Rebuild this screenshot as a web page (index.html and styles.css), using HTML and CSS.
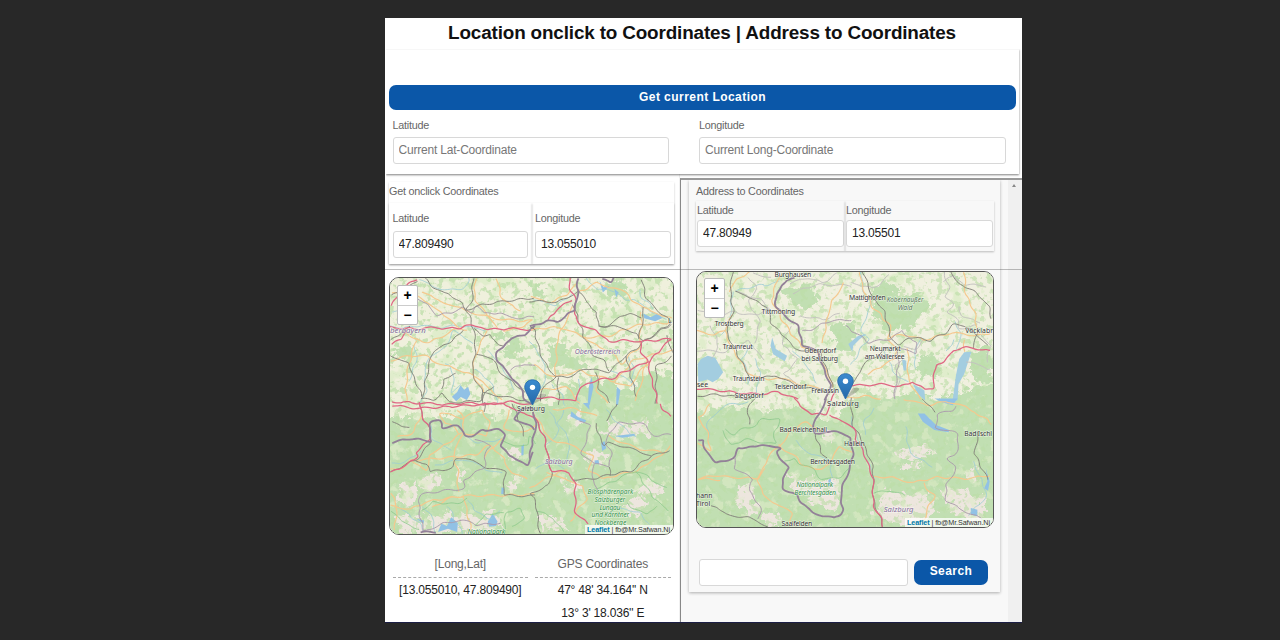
FILE: index.html
```html
<!DOCTYPE html>
<html lang="en">
<head>
<meta charset="utf-8">
<title>Location onclick to Coordinates</title>
<link rel="stylesheet" href="styles.css">
</head>
<body>
<svg class="defs" width="0" height="0" aria-hidden="true">
  <defs>
    <filter id="woods" x="0" y="0" width="100%" height="100%" color-interpolation-filters="sRGB">
      <feTurbulence type="fractalNoise" baseFrequency=".16" numOctaves="3" seed="8"/>
      <feColorMatrix values="0 0 0 0 .74  0 0 0 0 .87  0 0 0 0 .66  9 0 0 0 -4.8"/>
    </filter>
    <filter id="fields" x="0" y="0" width="100%" height="100%" color-interpolation-filters="sRGB">
      <feTurbulence type="fractalNoise" baseFrequency=".055" numOctaves="4" seed="21"/>
      <feColorMatrix values="0 0 0 0 .88  0 0 0 0 .93  0 0 0 0 .8  8 0 0 0 -4.2"/>
    </filter>
    <filter id="clearings" x="0" y="0" width="100%" height="100%" color-interpolation-filters="sRGB">
      <feTurbulence type="fractalNoise" baseFrequency=".09" numOctaves="4" seed="14"/>
      <feColorMatrix values="0 0 0 0 .87  0 0 0 0 .92  0 0 0 0 .79  9 0 0 0 -5.1"/>
    </filter>
    <filter id="rough" x="-10%" y="-10%" width="120%" height="120%" color-interpolation-filters="sRGB">
      <feTurbulence type="fractalNoise" baseFrequency=".12" numOctaves="3" seed="3" result="n"/>
      <feDisplacementMap in="SourceGraphic" in2="n" scale="18" xChannelSelector="R" yChannelSelector="G"/>
    </filter>
    <linearGradient id="pinFill" x1="0" y1="0" x2="0" y2="1"><stop offset="0" stop-color="#3b8bd0"/><stop offset="1" stop-color="#2568a8"/></linearGradient>
    <symbol id="pin" viewBox="0 0 28 28" overflow="visible">
      <path d="M9 25 L16 15 Q23 13 22 17 Q17 22 9 25Z" fill="#333" opacity=".25"/>
      <path d="M8.5.6C4 .6.7 3.900.7 8.100c0 2 .8 3.700 1.800 5.700L8.500 26l6-12.200c1-2 1.800-3.700 1.800-5.700C16.300 3.900 13 .6 8.500.6Z" fill="url(#pinFill)" stroke="#2a6cab" stroke-width=".9"/>
      <circle cx="8.500" cy="8.200" r="2.700" fill="#fff"/>
    </symbol>
  </defs>
</svg>

<main class="app">
  <h1 class="title">Location onclick to Coordinates | Address to Coordinates</h1>

  <section class="current">
    <button class="btn btn-wide">Get current Location</button>
    <div class="current-fields">
      <label class="field">Latitude<input placeholder="Current Lat-Coordinate"></label>
      <label class="field">Longitude<input placeholder="Current Long-Coordinate"></label>
    </div>
  </section>

  <div class="columns">
    <section class="click-col">
      <div class="click-card">
        <h2 class="caption">Get onclick Coordinates</h2>
        <div class="pair">
          <label class="field cell">Latitude<input value="47.809490"></label>
          <label class="field cell">Longitude<input value="13.055010"></label>
        </div>
      </div>

      <div class="map map-click">
        <svg class="tiles" viewBox="389 277 285 258" preserveAspectRatio="none">
          <rect x="389" y="277" width="285" height="258" fill="#eff0dc"/>
          <rect x="389" y="277" width="285" height="258" filter="url(#fields)"/>
          <g filter="url(#rough)">
            <path class="wood" d="M380 424L410 415L440 420L470 411L505 418L520 400L555 402L575 385L610 380L632 390L650 370L680 378V545H380Z"/>
            <path class="wood" d="M548 342L562 343L575 358L590 362L586 371L550 365ZM391 349L408 345L419 350L400 357L390 358ZM508 342L520 338L523 348L512 360L505 355ZM492 331L507 331L505 339L493 338ZM531 283L544 287L541 298L532 300ZM605 283L622 280L630 291L620 300L607 293Z"/>
            <path class="rock" d="M400 486L412 482L418 492L409 509L398 500ZM420 478L432 472L441 484L432 490L422 488ZM455 467L465 470L461 483L452 479ZM505 451L517 446L522 458L513 463ZM583 457L596 451L610 457L603 465L585 464ZM599 432L614 422L630 424L646 418L650 433L628 441L612 435ZM508 480L519 476L520 487L507 490ZM560 487L573 481L580 490L570 497ZM395 519L412 515L430 521L445 514L470 517L497 512L505 529L480 534H395ZM540 510L553 517L566 529L540 532ZM622 508L640 493L650 505L638 518ZM632 489L650 480L663 491L652 498ZM569 417L578 411L584 422L573 425Z"/>
          </g>
          <rect x="389" y="277" width="285" height="258" filter="url(#woods)" opacity=".75"/>
          <rect x="389" y="395" width="285" height="140" filter="url(#clearings)" opacity=".7"/>
          <g class="lines" transform="translate(384 270) scale(.33333)">
            <path class="lake" d="M202 380L218 366L228 345L239 359L251 350L258 372L247 390L229 381L215 394Z"/>
            <path class="stream" d="M100 25Q180 65 220 55T250 24M20 120L65 118L90 150M0 165Q60 178 110 162L160 172L220 162L300 180M270 220L210 180L180 230L135 260L120 300L125 370L108 400M270 300Q330 320 340 400M180 280Q220 300 200 370L230 345M90 225Q105 280 70 330M310 240Q360 285 390 355"/>
            <path class="road" d="M20 70Q90 55 155 115T250 180M115 62Q160 95 247 118Q330 155 447 150M275 20L270 86L340 175M60 175Q80 220 140 215L245 162M20 270Q80 250 130 260Q200 300 250 305Q300 340 350 385M340 20L350 80L410 120M95 215Q55 300 65 400M307 180L275 250L262 310L300 370M360 180Q390 185 447 150"/>
            <path class="border thin" d="M75 68L100 90L128 95L155 135L215 120L240 110L260 125L280 105L295 128L350 125L380 145L450 140M380 300L420 280L450 290"/>
            <path class="rail" d="M118 22L145 50L190 68L225 95L247 118L258 150L265 178L275 205L273 245L262 310L296 370L293 405M265 22L262 85L247 118M247 118L290 105L370 88L450 80M20 75L95 30M240 178L195 215L145 240L130 290L115 385M20 255L70 280L110 380M270 178L290 195L318 190L340 225L360 230M275 250L330 270L350 310L390 335L420 370M110 385L150 388L175 370L192 400L293 390L296 370L430 390M20 210L75 170M172 360L178 325L215 310M293 390L325 345"/>
            <path class="moto" d="M0 170L100 177L125 172L225 175L243 163L290 167L308 178L390 175L450 180M20 222L50 205L67 180M20 105L65 40L95 25M20 395L100 400L190 405L250 400L310 405L380 395L440 405"/>
            <path class="border" d="M450 168L415 195L378 200L358 232L340 240L338 270L370 298L380 325L405 340L417 380L440 405"/>
          </g>
          <g class="lines" transform="translate(530 270) scale(.33333)">
            <path class="lake" d="M210 30L223 50L240 45L220 65ZM255 54L268 65L260 80ZM185 320L192 350L180 405L174 405L178 350ZM262 350L273 360L266 405L260 405ZM342 128L365 140L385 128L400 142L378 152L345 143Z"/>
            <path class="stream" d="M170 20L200 60L235 50L290 90L315 80L350 115L410 145M10 85L75 105L125 70M0 210L35 260L50 315L30 360L0 385M65 340L95 370L105 405M150 330L145 405M245 300L290 325L318 345M300 260L315 300L305 350M330 60L340 85L375 115"/>
            <path class="road" d="M145 65L200 35L280 60L340 110L430 145M0 180L60 170L110 175L160 200L240 195L330 160L430 155M130 105L85 200L75 320M0 75L55 95L115 70L140 40M160 200L240 245L280 280L335 220M10 285L75 320L150 300L210 320L255 335L310 270L430 240M255 335L300 350L360 270M210 320L200 360L240 400M30 360L110 350L150 400M335 120L340 150L330 230M350 265L340 330L315 395"/>
            <path class="rail" d="M145 65L170 85L185 115L200 120L207 168L250 165L325 190L340 215L430 160M0 90L80 93L120 75L145 65M0 170L15 185L35 260L75 320L110 322L135 310L165 295L240 305L290 258L340 215L430 155M205 168L245 162L270 135L300 130L340 140M340 110L345 140L335 175L330 205M340 25L350 85L430 155M130 100L155 165L160 200L185 232L190 260L220 263L240 300M75 320L40 350L30 390M85 325L90 405M200 307L207 350L245 400M290 258L310 330L320 380M410 195L430 250M380 405L380 290L430 260"/>
            <path class="moto" d="M120 22L123 60L140 90L130 130L155 160L205 185L235 215L300 210L335 215L430 203M335 215L335 240L355 270L310 295L265 310L255 325L200 330L150 350L140 395L100 385L10 380M355 270L375 350L385 405M355 275L430 205M55 150L80 120L125 85"/>
            <path class="border" d="M0 168L50 150L80 155L135 115L145 65V20M220 22L245 38L252 20"/>
          </g>
          <g class="lines" transform="translate(384 403) scale(.33333)">
            <path class="lake" d="M412 130L420 124L418 158L412 158ZM160 390L170 365L187 372L200 345L220 363L218 390L190 380ZM310 360L325 335L340 358L335 372L315 374ZM95 350L118 355L116 365ZM352 255L360 258L358 275L351 275Z"/>
            <path class="stream" d="M135 70L145 110L200 145M110 310L140 335L155 390M40 310L95 355L120 390M190 310L205 340L235 395M250 295L275 330L310 350L345 330M225 40L240 95L280 120L350 110M20 185L60 180L105 145M150 190L235 170L350 215"/>
            <path class="road" d="M220 100L215 75L180 60L165 30L235 45L290 20L315 55L310 100L230 90L135 160L125 200L75 175M220 20L240 50L235 90L205 160L220 200V265M20 200Q50 205 80 175L220 160L280 155L315 125L360 165L380 210L430 230M20 310L75 320L120 300L240 280L350 278L450 275M145 315L190 290L240 280L260 390M110 35L85 90L35 105M350 110L300 165M20 270L35 310L30 380M375 25L360 75L410 90L450 70"/>
            <path class="park" d="M350 115L390 125L430 130L440 95L450 120M110 325L140 300L220 305L250 290M360 390L365 330L410 320L420 350L380 375M270 370L305 335L355 335M20 330Q60 370 100 380"/>
            <path class="border thin" d="M275 110L320 130L300 165L305 190L240 235L240 260L175 265L110 275L100 295L105 350L120 390M120 388L195 360L250 355L275 370L350 365"/>
            <path class="rail" d="M20 210L65 185L95 175L140 110L130 70L108 30L105 0M95 175L125 185L137 208L210 195L215 165L240 165L290 190L365 205L355 275L390 280L450 280M20 60L75 75M385 0L405 50L420 105M300 0L302 30"/>
            <path class="moto" d="M20 210L90 175L100 155L90 150L140 105L128 65L108 30L105 0M20 5L100 15L235 7L350 0L450 45"/>
            <path class="border" d="M20 118L75 108L140 115L130 65L165 45L170 75L225 70L240 100L275 100L290 80L350 80L360 100L350 130L375 160L430 188L448 150M450 20L410 15L390 50L435 65L450 80M110 390L155 388"/>
          </g>
          <g class="lines" transform="translate(530 403) scale(.33333)">
            <path class="lake" d="M125 25L145 42L170 52L165 60L140 50L122 40ZM160 0L178 0L180 20ZM215 122L225 115L230 137L218 145ZM255 100L315 93L318 99L280 105ZM195 174L207 172L209 184L196 185Z"/>
            <path class="stream" d="M60 30L90 80L50 130M100 20L85 65L120 110L115 175M230 20L260 60L320 100M20 200L60 170L100 200M270 320L330 330L360 370"/>
            <path class="road" d="M20 45L60 110L120 125L190 160L180 200L220 230L325 205L400 155L420 130M0 260L40 230L110 200M70 20L130 15L200 40M235 100L330 140L400 150M50 210L160 250L170 290L120 360"/>
            <path class="park" d="M190 265L320 205L375 290L420 330M320 205L410 255M290 300L350 340L380 310M20 330L70 345L100 385"/>
            <path class="border thin" d="M150 55L185 65L155 150L195 185L240 190L250 155L230 130L235 90L270 60L350 65L370 100L430 95M195 185L185 220L205 265"/>
            <path class="rail" d="M10 30L45 115L65 205L60 250L0 275L20 310L30 390M130 230L180 230L310 205L365 158L420 145M200 65L205 90L225 130L240 118L365 158M230 50L265 0M240 190L245 220"/>
            <path class="moto" d="M10 30L45 115L65 205L120 210L135 240V330L180 370M398 0L400 20L430 40"/>
            <path class="border" d="M0 170L5 110L20 85L10 30"/>
          </g>
          <g class="names">
            <text x="389" y="332" class="region" textLength="36" lengthAdjust="spacingAndGlyphs">berbayern</text>
            <text x="575" y="354" class="region" textLength="46" lengthAdjust="spacingAndGlyphs">Oberösterreich</text>
            <text x="545" y="464" class="region" textLength="28" lengthAdjust="spacingAndGlyphs">Salzburg</text>
            <text x="517" y="411" textLength="28">Salzburg</text>
            <text x="669" y="322">L</text>
            <g class="parkname"><text x="588" y="495" textLength="46" lengthAdjust="spacingAndGlyphs">Biosphärenpark</text><text x="595" y="502.500" textLength="31">Salzburger</text><text x="600" y="510.500" textLength="21">Lungau</text><text x="592" y="518" textLength="38">und Kärntner</text><text x="595" y="525.500" textLength="32">Nockberge</text><text x="467" y="535" textLength="38">Nationalpark</text></g>
          </g>
          <use href="#pin" x="524" y="379" width="28" height="28"/>
        </svg>
        <div class="zoom"><span>+</span><span>−</span></div>
        <div class="credit"><b>Leaflet</b> | fb@Mr.Safwan.Nj</div>
      </div>

      <div class="results">
        <div class="result"><h3>[Long,Lat]</h3><p>[13.055010, 47.809490]</p></div>
        <div class="result"><h3>GPS Coordinates</h3><p>47° 48' 34.164'' N</p><p>13° 3' 18.036'' E</p></div>
      </div>
    </section>

    <section class="address-col">
      <div class="address-card">
        <h2 class="caption">Address to Coordinates</h2>
        <div class="pair">
          <label class="field cell">Latitude<input value="47.80949"></label>
          <label class="field cell">Longitude<input value="13.05501"></label>
        </div>

        <div class="map map-address">
          <svg class="tiles" viewBox="696 271 298 256" preserveAspectRatio="none">
            <rect x="696" y="271" width="298" height="256" fill="#f0f0df"/>
            <rect x="696" y="271" width="298" height="256" filter="url(#fields)"/>
            <g filter="url(#rough)">
              <path class="wood" d="M690 415L730 405L765 412L800 407L835 420L850 400L870 392L890 400L915 390L930 400L970 390L1000 382V535H690Z"/>
              <path class="wood" d="M776 291L794 285L811 282L818 300L805 309L790 298ZM870 286L884 278L900 292L920 293L928 305L915 326L890 328L875 318ZM832 323L850 320L858 338L850 352L835 350ZM916 361L932 352L940 362L935 375L920 378ZM969 355L986 345L994 360L992 380L975 385ZM952 278L961 275L960 285Z"/>
              <path class="rock" d="M738 487L755 483L752 498L762 508L748 516L735 500ZM783 470L800 478L835 480L840 495L835 512L815 505L797 490ZM820 433L835 430L830 443ZM898 450L925 443L935 452L915 461L900 457ZM902 465L920 463L918 470L900 471ZM880 495L895 490L908 496L930 493L935 510L920 524L890 522L875 510ZM940 490L955 487L985 495V520L960 518ZM965 472L975 467L977 485ZM762 515L773 508L779 525L764 525Z"/>
            </g>
            <rect x="696" y="271" width="298" height="256" filter="url(#woods)" opacity=".65"/>
            <rect x="696" y="395" width="298" height="132" filter="url(#clearings)" opacity=".6"/>
            <g class="lines" transform="translate(690 265) scale(.33333)">
              <path class="lake pale" d="M20 295L30 280L50 270L73 276L85 297L97 320L82 340L65 350L50 342L22 350ZM245 215L256 250L290 270L283 287L248 266L240 240Z"/>
              <path class="stream" d="M125 75L120 160L90 210M190 240L150 280L175 320L170 360M220 55L160 70L130 75M270 45L220 60M310 260L350 300L380 350M190 400L210 320L190 280"/>
              <path class="local" d="M20 130L70 150L125 140L200 150L235 125M130 75L210 100L240 135M20 255L100 260L170 225L220 280M175 35L200 70L170 110L210 170L190 230M190 25L240 35M310 80L390 55L480 60M300 50L350 35L400 50L440 25M330 150L400 160L450 145M300 180L275 235L320 280L280 330L340 365M60 180L85 240L60 280"/>
              <path class="road" d="M275 20L250 70L245 105L290 185L335 240L380 265L405 310L430 370M115 75L140 40L180 20M125 150L100 195L65 205L20 195M100 195L130 260L175 325L235 345L260 335L400 375M400 230L415 130L460 50"/>
              <path class="rail" d="M130 75L190 100L230 125L245 175L315 252L390 260L430 370M125 22L120 75L128 145L105 195L135 255L170 320L175 345L255 330L330 365L430 380M20 390L80 385L180 400"/>
              <path class="moto" d="M20 370L80 375L135 380L200 385L265 378L300 390L320 405M420 405L440 380"/>
              <path class="border" d="M315 38L290 40L270 70L255 80L255 120L325 185L335 235L380 260L405 320L420 365L405 405"/>
              <path class="border thin" d="M340 195L370 190L420 165L480 160"/>
            </g>
            <g class="lines" transform="translate(845 265) scale(.33333)">
              <path class="lake pale" d="M345 280L360 260L382 258L360 325L343 355L340 405H325L335 330ZM10 235L40 210L65 205L45 220L25 240L22 258ZM172 280L185 285L185 315L177 315ZM205 355L240 375L242 405L220 385Z"/>
              <path class="stream" d="M50 20L55 70L80 110L50 190L70 220L15 300M230 220L210 260L215 310M325 220L310 260M330 170L350 200L340 250M120 260L130 290L160 340L190 345"/>
              <path class="local" d="M300 20L315 65L305 90L325 110L310 145L340 155L345 190L400 180M345 120L350 150L410 170M240 220L220 250L180 245M170 280L150 300L165 330L150 400M20 50L90 70L130 30M300 45L330 30L360 55L425 60M410 210L440 240L430 290M370 290L440 310"/>
              <path class="road" d="M45 20L55 65L80 115L135 180L130 220L175 205L240 225L325 200L400 210L440 200M360 20L365 80L395 150L400 210M130 220L160 250L150 280L65 325M190 250V340L230 400M0 400L55 390L110 400M360 225L360 260"/>
              <path class="rail" d="M55 20L80 90L120 140L135 210L160 240L190 215L225 220L260 225L310 200L320 178L365 180L430 240M320 20L340 50L390 75L410 100L435 120L442 160M20 355L45 320L65 290L130 245M385 250L400 205"/>
              <path class="moto" d="M10 358L60 360L110 355L170 365L205 345L240 375L265 370L275 300L300 285L330 255L370 245L440 258"/>
              <path class="border thin" d="M0 180L25 200L55 215L65 230L145 220L175 190L195 220L220 230L215 262L160 250L160 300L150 400"/>
            </g>
            <g class="lines" transform="translate(690 398) scale(.33333)">
              <path class="lake" d="M685 45L705 45L740 80L780 95L778 102L735 95L700 70ZM735 0L805 0L790 20L760 12ZM415 245L422 240L423 265L415 262ZM890 210L902 250L897 278L885 270L895 250ZM845 330L865 335L864 355L845 350Z"/>
              <path class="stream" d="M55 130L50 70L100 20L170 10M315 125L350 160L420 190L425 240M480 50L500 110L545 220M550 30L520 80L530 110M650 85L660 160L730 210M850 190L880 250L890 300L840 350"/>
              <path class="road" d="M60 20L20 60L50 100L60 160L20 130M90 245L20 240M20 240L70 230L110 235L200 240L245 160L265 145L305 95L350 70L400 100M200 240L220 290L260 320L305 345L300 385M260 140L305 165L340 205L400 215L450 145L490 160M555 235L600 235L670 255L740 235L830 240L900 230M700 255L735 290L710 350L690 380M640 0L720 20L770 5L860 40L910 80M205 240L220 215"/>
              <path class="park" d="M100 95L130 110L160 90L200 80L220 60L270 65L250 95L255 140L160 120L120 145L95 100M280 190L310 180L330 200L370 210L390 240L440 240L475 215M555 285L600 275L650 295"/>
              <path class="rail" d="M375 105L390 160L410 180M480 0L490 80L520 130L550 210V300L580 385M60 320L110 350L180 360L230 385M870 100L855 160L870 190L895 240M180 75L170 40L190 0M740 40L700 0"/>
              <path class="moto" d="M310 0L360 45L410 47L415 15M420 45L450 70L495 85L500 130L525 170L550 250L550 320L570 350L580 385"/>
              <path class="border" d="M20 122L35 123L40 150L75 195L130 180L145 148L195 148L215 138L250 150L275 148L260 160L265 185L300 208L275 240L280 270L315 290L350 335L430 362L460 335L450 290L470 235L490 170L480 120L440 95L420 105L370 105L370 80L400 20L410 0"/>
              <path class="border thin" d="M130 180L130 210L190 245L175 275L215 340L205 360M740 85L810 110L805 155L775 185L795 200L795 230L770 260L770 310L880 365M740 85L745 45L790 35L800 25"/>
            </g>
            <g class="names">
              <text x="774" y="276" textLength="37">Burghausen</text><text x="761" y="313" textLength="34">Tittmoning</text><text x="714" y="325" textLength="29">Trostberg</text><text x="722" y="348" textLength="30">Traunreut</text><text x="804" y="352" textLength="32">Oberndorf</text><text x="801" y="360" textLength="37">bei Salzburg</text><text x="696" y="386">see</text><text x="732" y="380" textLength="32">Traunstein</text><text x="774" y="388" textLength="32">Teisendorf</text><text x="811" y="392" textLength="28">Freilassin</text><text x="734" y="397" textLength="29">Siegsdorf</text><text x="849" y="299" textLength="37">Mattighofen</text><text x="966" y="332" textLength="28">Vöcklabr</text><text x="870" y="350" textLength="31">Neumarkt</text><text x="865" y="358" textLength="40">am Wallersee</text><text x="779" y="432" textLength="48">Bad Reichenhall</text><text x="844" y="446" textLength="21">Hallein</text><text x="810" y="464" textLength="45">Berchtesgaden</text><text x="965" y="436" textLength="28">Bad Ischl</text><text x="695" y="498">hann</text><text x="695" y="506">Tirol</text><text x="781" y="526.500" textLength="31">Saalfelden</text>
              <text x="827" y="406" class="city" textLength="32">Salzburg</text>
              <g class="forest"><text x="887" y="301" textLength="37" lengthAdjust="spacingAndGlyphs">Kobernaußer</text><text x="898" y="309" textLength="15">Wald</text></g>
              <g class="parkname"><text x="796" y="487" textLength="37">Nationalpark</text><text x="794" y="495" textLength="42">Berchtesgaden</text></g>
              <text x="884" y="511.500" class="region" textLength="30" lengthAdjust="spacingAndGlyphs">Salzburg</text>
            </g>
            <use href="#pin" x="837" y="372.500" width="28" height="28"/>
          </svg>
          <div class="zoom"><span>+</span><span>−</span></div>
          <div class="credit"><b>Leaflet</b> | fb@Mr.Safwan.Nj</div>
        </div>

        <div class="search"><input aria-label="Address"><button class="btn">Search</button></div>
      </div>
      <div class="scrollbar"><i></i></div>
    </section>
  </div>
  <div class="divider"></div>
</main>
<script src="map.js"></script>
</body>
</html>
```
FILE: styles.css
```css
* { box-sizing: border-box; }
body { margin: 0; height: 640px; padding: 18px 0 0 385px; overflow: hidden; background: #282828; color: #666; font: 10.8px/12px "Liberation Sans", Arial, sans-serif; letter-spacing: -.23px; }
h1, h2, h3, p { margin: 0; font-weight: normal; }
.defs { display: block; }
.app { position: relative; display: flex; flex-direction: column; width: 637px; height: 605px; overflow: hidden; background: #fff; border-bottom: 1px solid #1c1f45; }
.title { height: 31px; flex: none; padding-right: 3px; color: #111; text-align: center; font-size: 18.9px; line-height: 29px; font-weight: bold; letter-spacing: -.16px; }

.current { flex: none; width: 633px; height: 125px; margin-left: 1px; padding: 36px 3px 0; border-top: 1px solid #f7f7f7; box-shadow: 0 1px 2px rgba(0,0,0,.5); clip-path: inset(0 -3px -4px 0); }
.btn { border: 0; border-radius: 7px; padding: 0 0 1px; background: #0b57a8; color: #fff; font: bold 12px/23px "Liberation Sans", Arial, sans-serif; letter-spacing: .45px; }
.btn-wide { display: block; width: 627px; height: 25px; margin-top: -1px; }
.current-fields { display: grid; grid-template-columns: 276px 307px; gap: 30.5px; padding: 9px 0 0 3.5px; }
.field { display: block; white-space: nowrap; }
input { display: block; width: 100%; height: 27px; margin: 7px 0 0; padding: 0 5px 2px; border: 1px solid #d8d8d8; border-radius: 3px; background: #fff; color: #222; font: 12px "Liberation Sans", Arial, sans-serif; letter-spacing: -.2px; outline: 0; }
input::placeholder { color: #777; opacity: 1; }
.current-fields input { margin-top: 6px; }

.columns { display: flex; flex: 1; min-height: 0; }
.click-col { width: 295px; flex: none; padding: 8px 6px 0 4px; border-right: 1px solid #f0f0f0; }
.click-card { width: 285px; height: 82px; padding-top: 3px; box-shadow: 0 1px 2px rgba(0,0,0,.22); }
.pair { display: flex; }
.click-card .pair { margin-top: 6px; }
.cell { box-shadow: 0 1px 2px rgba(0,0,0,.25); }
.click-card .cell { width: 142.500px; height: 61px; padding: 9px 3.500px 0; }
.caption { font-size: 10.8px; line-height: 13px; height: 12px; }

.map { position: relative; overflow: hidden; border: 1px solid #555; border-radius: 10px; }
.map-click { width: 285px; height: 258px; margin-top: 13px; }
.tiles { display: block; width: 100%; height: 100%; }
.zoom { position: absolute; left: 7px; top: 7px; width: 21px; height: 40px; border: 1px solid #bbb; border-radius: 2px; background: #fff; color: #000; font: bold 14px/18px "Liberation Sans", Arial, sans-serif; text-align: center; }
.map-address .zoom { top: 6px; }
.zoom span { display: block; height: 19px; }
.zoom span + span { border-top: 1px solid #ccc; }
.credit { position: absolute; right: 0; bottom: 0; height: 9px; padding: 0 3px 0 2px; background: rgba(255,255,255,.75); color: #333; font: 7.2px/9px "Liberation Sans", Arial, sans-serif; letter-spacing: -.08px; white-space: nowrap; }
.credit b { color: #0078a8; }

.results { display: grid; grid-template-columns: 135.500px 135.500px; gap: 7px; padding: 21px 0 0 3.500px; text-align: center; }
.result h3 { height: 22px; font-size: 12px; line-height: 17px; letter-spacing: -.2px; border-bottom: 1px dashed #aaa; }
.result p { height: 22.500px; color: #222; font-size: 12px; line-height: 24px; letter-spacing: -.2px; white-space: nowrap; }

.address-col { display: flex; justify-content: space-between; width: 342px; margin-top: 4px; padding-left: 8px; border-top: 2px solid #999; border-left: 1px solid #888; background: #f8f8f8; }
.address-card { width: 311px; height: 412px; padding: 5px 6px 0 7px; box-shadow: 0 1px 3px rgba(0,0,0,.3); clip-path: inset(0 -4px -5px -4px); }
.address-card .pair { margin-top: 4px; }
.address-card .cell { width: 149px; height: 50px; padding: 3px 1px 0; }
.address-card .cell input { margin-top: 4px; }
.map-address { width: 298px; height: 257px; margin-top: 20px; }
.search { display: flex; gap: 6px; padding: 31px 0 0 3px; }
.search input { width: 209px; margin: 0; }
.search .btn { width: 74px; height: 25px; margin-top: 1px; padding-bottom: 2px; }
.scrollbar { width: 14px; padding: 4px 0 0 4px; background: #f0f0f0; }
.scrollbar i { display: block; width: 0; border: 2.500px solid transparent; border-top: 0; border-bottom: 3px solid #888; }
.divider { position: absolute; left: 0; right: 0; top: 251px; height: 1px; background: rgba(90,90,90,.4); }

.wood { fill: #c1dfb2; }
.rock { fill: #ede6de; }
.lake { fill: #91c1e5; }
.lake.pale { fill: #a3cde0; }
.stream, .road, .rail, .moto, .border, .park, .local { fill: none; stroke-linejoin: round; }
.stream { stroke: #9dccd5; stroke-width: 2.5; }
.road { stroke: #f5c88e; stroke-width: 3.5; }
.local { stroke: #c4c2bf; stroke-width: 3; }
.rail { stroke: #85847c; stroke-width: 3; }
.moto { stroke: #df6784; stroke-width: 3.8; }
.border { stroke: #938198; stroke-width: 5.5; }
.border.thin { stroke: #ab9cac; stroke-width: 3; }
.park { stroke: #8cc98c; stroke-width: 2.500; }
.names { font: 6.900px "Noto Sans", sans-serif; letter-spacing: 0; fill: #333; paint-order: stroke; stroke: rgba(255,255,255,.65); stroke-width: 1px; }
.region { fill: #826a98; font-style: italic; }
.parkname { fill: #35914a; font-style: italic; }
.forest { fill: #567456; font-style: italic; }
.city { font-size: 7.600px; }
```
FILE: map.js
```js
// Turns the straight segments of roads and borders into gently winding curves.
// The offset depends only on position, so crossing lines stay connected.
const bend = (p) => [
  p.x + 3 * Math.sin(p.y / 9 + p.x / 23) + 1.5 * Math.sin(p.x / 5),
  p.y + 3 * Math.sin(p.x / 10 - p.y / 19) + 1.5 * Math.sin(p.y / 6),
];

document.querySelectorAll('.lines path:not(.lake)').forEach((path) => {
  const parts = path.getAttribute('d').split('M').filter(Boolean);
  const probe = document.createElementNS('http://www.w3.org/2000/svg', 'path');
  path.setAttribute('d', parts.map((part) => {
    probe.setAttribute('d', 'M' + part);
    const length = probe.getTotalLength();
    const steps = Math.max(2, Math.round(length / 8));
    const pts = [];
    for (let i = 0; i <= steps; i++) pts.push(bend(probe.getPointAtLength(length * i / steps)));
    let d = 'M' + pts[0].join(' ');
    for (let i = 1; i < steps; i++) {
      const [x, y] = pts[i];
      const [nx, ny] = pts[i + 1];
      d += `Q${x} ${y} ${(x + nx) / 2} ${(y + ny) / 2}`;
    }
    return d + 'L' + pts[steps].join(' ');
  }).join(''));
});
```
